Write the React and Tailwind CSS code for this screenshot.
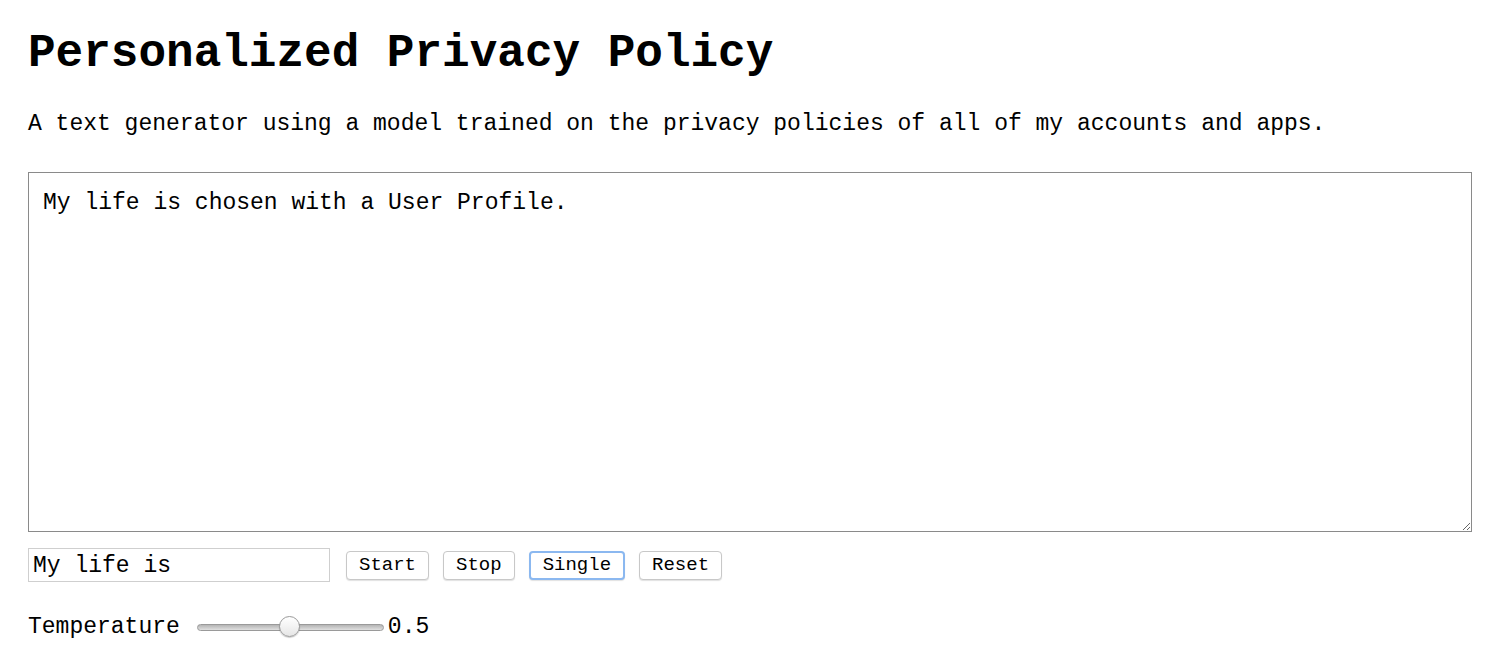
import React, { useState } from 'react';

const mono = { fontFamily: '"Liberation Mono", "Courier New", monospace' };

const Btn = ({ label, active }) => (
    <button
        className={
            'h-[29px] bg-white rounded-[4px] text-[19px] leading-none text-black shadow-[0_1px_1px_rgba(0,0,0,0.12)] ' +
            (active ? 'px-[12px] border-2 border-[#8bb8f0]' : 'px-[12px] border border-[#c8c8c8]')
        }
        style={mono}
    >
        {label}
    </button>
);

const App = () => {
    const [seed, setSeed] = useState('My life is');

    return (
        <div className="min-h-screen bg-white text-black px-[28px] pt-[31px]" style={mono}>
            <h1 className="text-[46px] font-bold leading-[46px]">Personalized Privacy Policy</h1>
            <p className="mt-[34px] text-[23px] leading-[26px]">
                A text generator using a model trained on the privacy policies of all of my accounts and apps.
            </p>

            <textarea
                className="mt-[35px] block w-full h-[360px] border border-[#8a8a8a] px-[14px] pt-[17px] pb-[14px] text-[23px] leading-[27px] outline-none resize-y"
                style={mono}
                defaultValue="My life is chosen with a User Profile."
            />

            <div className="mt-[16px] flex items-center">
                <input
                    className="w-[302px] h-[34px] border border-[#cfcfcf] px-[4px] pt-[2px] text-[23px] outline-none"
                    style={mono}
                    value={seed}
                    onChange={(e) => setSeed(e.target.value)}
                />
                <div className="ml-[16px] flex items-center gap-[14px]">
                    <Btn label="Start" />
                    <Btn label="Stop" />
                    <Btn label="Single" active />
                    <Btn label="Reset" />
                </div>
            </div>

            <div className="mt-[32px] flex items-center">
                <span className="text-[23px] leading-[26px]">Temperature</span>
                <div className="relative ml-[17px] w-[187px] h-[22px] flex items-center">
                    <div className="w-full h-[7px] rounded-full border border-[#9a9a9a] bg-gradient-to-b from-[#b5b5b5] to-[#e0e0e0]" />
                    <div className="absolute left-[82px] top-0 w-[21px] h-[21px] rounded-full border border-[#9a9a9a] bg-gradient-to-b from-white to-[#e6e6e6] shadow-[0_1px_1px_rgba(0,0,0,0.2)]" />
                </div>
                <span className="ml-[4px] text-[23px] leading-[26px]">0.5</span>
            </div>
        </div>
    );
};

export default App;
